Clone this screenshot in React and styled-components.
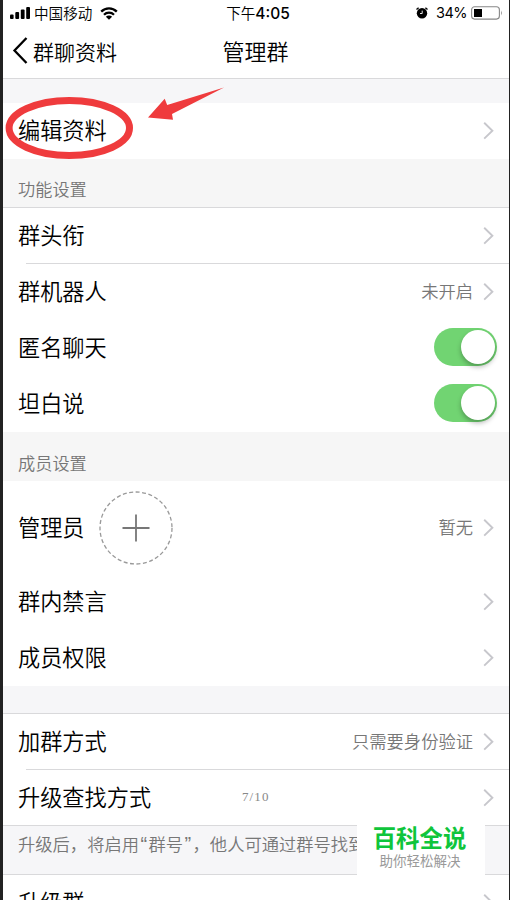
import React from 'react'
import styled, { createGlobalStyle } from 'styled-components'

const GlobalStyle = createGlobalStyle`
	* {
		box-sizing: border-box;
	}
	body {
		margin: 0;
		background: #fff;
	}
`

const Screen = styled.div`
	position: relative;
	width: 510px;
	height: 900px;
	overflow: hidden;
	border-left: 3px solid #222;
	border-right: 1px solid #222;
	background: #fff;
	color: #000;
	font-family: 'Noto Sans CJK SC', 'Liberation Sans', sans-serif;
	font-weight: 350;
`

const StatusBar = styled.div`
	display: grid;
	grid-template-columns: 1fr auto 1fr;
	align-items: center;
	height: 26px;
	padding: 0 6px 0 7px;
	font-size: 14.6px;
	line-height: 24px;
`

const StatusGroup = styled.div`
	display: flex;
	align-items: center;
	justify-content: ${(p) => (p.$end ? 'flex-end' : 'flex-start')};
`

const Carrier = styled.span`
	margin: 0 8px 0 4px;
`

const Clock = styled.span`
	margin-left: 3px;
`

const Latin = styled.span`
	font-family: Inter, 'Liberation Sans', sans-serif;
	font-size: ${(p) => p.$size || 15}px;
	font-weight: ${(p) => p.$weight || 400};
`

const Percent = styled(Latin)`
	margin: 0 4px 0 8px;
	letter-spacing: -0.5px;
`

const NavBar = styled.div`
	display: grid;
	grid-template-columns: 1fr auto 1fr;
	align-items: center;
	height: 53px;
	padding: 0 10px 3px 9px;
	border-bottom: 1px solid #d9d9db;
`

const BackButton = styled.button`
	display: flex;
	align-items: center;
	gap: 5px;
	padding: 0;
	border: none;
	background: none;
	color: inherit;
	font: inherit;
	font-size: 21px;
	line-height: 30px;
`

const Title = styled.h1`
	margin: 0 0 2px;
	font-size: 22px;
	font-weight: 350;
	line-height: 30px;
`

const Gap = styled.div`
	height: ${(p) => p.$height}px;
	background: #f6f6f8;
	border-bottom: ${(p) => (p.$line ? '1px solid #d9d9db' : 'none')};
`

const SectionHeader = styled.div`
	height: 49px;
	padding: ${(p) => (p.$line ? 17 : 18)}px 15px 0;
	background: #f6f6f6;
	border-bottom: ${(p) => (p.$line ? '1px solid #d9d9db' : 'none')};
	color: #777;
	font-size: 17.2px;
	line-height: 26px;
`

const RowBox = styled.div`
	display: flex;
	align-items: center;
	height: ${(p) => p.$height || 56}px;
	padding: 0 15px;
`

const Label = styled.span`
	font-size: 22.2px;
	line-height: 32px;
	margin-bottom: ${(p) => (p.$tall ? 3 : 5)}px;
	white-space: nowrap;
`

const Side = styled.div`
	display: flex;
	align-items: center;
	gap: 10px;
	margin-left: auto;
`

const Value = styled.span`
	margin-bottom: 2px;
	color: #777;
	font-size: 17.3px;
	line-height: 26px;
`

const Divider = styled.div`
	height: 1px;
	margin-left: ${(p) => (p.$full ? 0 : 23)}px;
	margin-top: -1px;
	background: #d9d9db;
`

const Track = styled.div`
	display: flex;
	justify-content: flex-end;
	width: 63px;
	height: 38px;
	margin: -2px -3px 0 0;
	padding: 2px;
	border-radius: 19px;
	background: #71d472;
`

const Knob = styled.div`
	width: 34px;
	height: 34px;
	border-radius: 50%;
	background: #fff;
	box-shadow: 0 3px 5px rgba(0, 0, 0, 0.28);
`

const AddButton = styled.button`
	display: flex;
	margin: 0 0 0 14px;
	padding: 0;
	border: none;
	background: none;
`

const Note = styled.div`
	height: 49px;
	padding: 5px 15px;
	background: #f6f6f8;
	border-bottom: 1px solid #d9d9db;
	color: #777;
	font-size: 17.3px;
	line-height: 26px;
	white-space: nowrap;
`

const Quote = styled.span`
	display: inline-block;
	width: 9.5px;
	font-family: 'Liberation Sans', sans-serif;
	font-size: 20px;
	line-height: 20px;
	text-align: center;
`

const PageCount = styled.span`
	position: absolute;
	left: 239px;
	top: 789px;
	color: #888;
	font-family: 'Liberation Serif', serif;
	font-size: 13px;
	font-weight: 400;
	letter-spacing: 1.1px;
	line-height: 16px;
`

const Watermark = styled.div`
	position: absolute;
	left: 354px;
	top: 818px;
	width: 128px;
	height: 62px;
	padding-top: 3px;
	background: #fff;
	text-align: center;
`

const WatermarkName = styled.div`
	padding-right: 3px;
	color: #0fc53b;
	font-size: 23.4px;
	font-weight: 700;
	line-height: 32px;
`

const WatermarkSlogan = styled.div`
	margin-top: -1px;
	padding-right: 2px;
	color: #999;
	font-size: 13.5px;
	font-weight: 400;
	line-height: 16px;
`

const Marks = styled.svg`
	position: absolute;
	left: 0;
	top: 80px;
`

function SignalIcon() {
	return (
		<svg width="20" height="12" viewBox="0 0 20 12">
			<rect x="0" y="7.5" width="3.6" height="4.5" rx="1" />
			<rect x="5.3" y="5" width="3.8" height="7" rx="1" />
			<rect x="10.8" y="2.5" width="3.8" height="9.5" rx="1" />
			<rect x="16.2" y="0" width="3.8" height="12" rx="1" />
		</svg>
	)
}

function WifiIcon() {
	return (
		<svg width="18" height="13" viewBox="0 0 18 13">
			<path d="M1.2 4.6a11 11 0 0 1 15.6 0M4 7.7a7.1 7.1 0 0 1 10 0" fill="none" stroke="#000" strokeWidth="2.3" />
			<path d="M9 12.8 5.9 9.7a4.4 4.4 0 0 1 6.2 0z" />
		</svg>
	)
}

function AlarmIcon() {
	return (
		<svg width="12" height="12" viewBox="0 0 12 12">
			<circle cx="6" cy="6.3" r="5.2" />
			<path d="M.5 2.6 2.6.7M11.5 2.6 9.4.7" stroke="#000" strokeWidth="1.3" />
			<path d="M6.2 3.6v2.9H4" fill="none" stroke="#fff" strokeWidth=".9" />
		</svg>
	)
}

function BatteryIcon() {
	return (
		<svg width="32" height="14" viewBox="0 0 32 14">
			<rect x=".6" y=".7" width="27.8" height="12.4" rx="3" fill="none" stroke="#888" strokeWidth="1.1" />
			<rect x="3" y="3" width="8" height="8" fill="#000" />
			<path d="M30 4.5q1.8 2.5 0 5z" fill="#888" />
		</svg>
	)
}

function Chevron() {
	return (
		<svg width="11" height="18" viewBox="0 0 11 18">
			<path d="M1.2 .8 9.4 8.7 1.2 16.6" fill="none" stroke="#c7c7cc" strokeWidth="1.9" />
		</svg>
	)
}

function Row({ label, value, arrow = true, height, children, line }) {
	return (
		<>
			<RowBox $height={height}>
				<Label $tall={height > 56}>{label}</Label>
				{children}
				{arrow && (
					<Side>
						{value && <Value>{value}</Value>}
						<Chevron />
					</Side>
				)}
			</RowBox>
			{line && <Divider />}
		</>
	)
}

function SwitchRow({ label }) {
	return (
		<Row label={label} arrow={false}>
			<Side>
				<Track>
					<Knob />
				</Track>
			</Side>
		</Row>
	)
}

export default function App() {
	return (
		<>
			<GlobalStyle />
			<Screen>
				<StatusBar>
					<StatusGroup>
						<SignalIcon />
						<Carrier>中国移动</Carrier>
						<WifiIcon />
					</StatusGroup>
					<Clock>
						下午<Latin $weight={500} $size={15.5}>4:05</Latin>
					</Clock>
					<StatusGroup $end>
						<AlarmIcon />
						<Percent $size={14.5}>34%</Percent>
						<BatteryIcon />
					</StatusGroup>
				</StatusBar>
				<NavBar>
					<BackButton>
						<svg width="16" height="27" viewBox="0 0 16 27">
							<path d="M14.5 1 2.5 13.5l12 12.5" fill="none" stroke="#000" strokeWidth="2.3" />
						</svg>
						群聊资料
					</BackButton>
					<Title>管理群</Title>
				</NavBar>
				<Gap $height={24} />
				<Row label="编辑资料" />
				<SectionHeader $line>功能设置</SectionHeader>
				<Row label="群头衔" line />
				<Row label="群机器人" value="未开启" />
				<SwitchRow label="匿名聊天" />
				<SwitchRow label="坦白说" />
				<SectionHeader>成员设置</SectionHeader>
				<Row label="管理员" value="暂无" height={93}>
					<AddButton>
						<svg width="74" height="74" viewBox="0 0 74 74" fill="none" stroke="#777">
							<circle cx="37" cy="37" r="36" stroke="#999" strokeWidth="1.3" strokeDasharray="4 2.5" />
							<path d="M37 23.5v27M23.5 37h27" strokeWidth="1.8" />
						</svg>
					</AddButton>
				</Row>
				<Row label="群内禁言" />
				<Row label="成员权限" />
				<Gap $height={28} $line />
				<Row label="加群方式" value="只需要身份验证" line />
				<Row label="升级查找方式" />
				<Divider $full />
				<Note>
					升级后，将启用<Quote>“</Quote>群号<Quote>”</Quote>，他人可通过群号找到
				</Note>
				<Row label="升级群" />

				<PageCount>7/10</PageCount>
				<Watermark>
					<WatermarkName>百科全说</WatermarkName>
					<WatermarkSlogan>助你轻松解决</WatermarkSlogan>
				</Watermark>
				<Marks width="240" height="84" viewBox="3 80 240 84">
					<ellipse cx="69.3" cy="128" rx="60.2" ry="27.5" fill="none" stroke="#ef3b3d" strokeWidth="7" />
					<path d="M224 87.5 172 114l1 5.700-25-2.200L164.700 98.800l2.500 6.200z" fill="#ef3b3d" />
				</Marks>
			</Screen>
		</>
	)
}
